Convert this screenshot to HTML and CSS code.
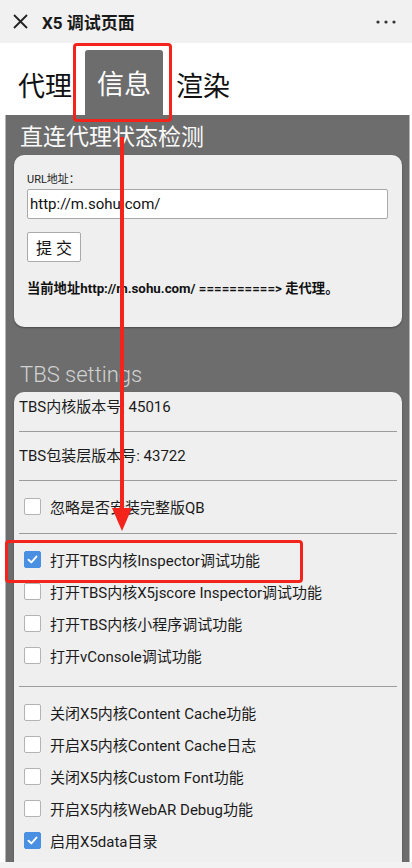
FILE: index.html
```html
<!DOCTYPE html>
<html lang="zh-CN">
<head>
<meta charset="utf-8">
<meta name="viewport" content="width=device-width, initial-scale=1">
<title>X5 调试页面</title>
<link rel="stylesheet" href="styles.css">
</head>
<body>
<div class="topbar">
  <svg class="close-icon" viewBox="0 0 15 15" aria-hidden="true"><path d="M1 1L14 14M14 1L1 14" stroke="#222" stroke-width="1.8" fill="none"/></svg>
  <span class="title">X5 调试页面</span>
  <svg class="more-icon" viewBox="0 0 20 4" aria-hidden="true"><circle cx="2" cy="2" r="1.6" fill="#333"/><circle cx="10" cy="2" r="1.6" fill="#333"/><circle cx="18" cy="2" r="1.6" fill="#333"/></svg>
</div>

<div class="tabs">
  <span class="tab">代理</span>
  <span class="tab tab-active">信息</span>
  <span class="tab">渲染</span>
</div>

<div class="panel">
  <h2 class="section-title">直连代理状态检测</h2>
  <div class="card card-proxy">
    <label class="field-label">URL地址：</label>
    <input class="url-input" type="text" value="http://m.sohu.com/">
    <button class="submit-btn">提 交</button>
    <p class="result">当前地址http://m.sohu.com/ ==========&gt; 走代理。</p>
  </div>

  <h2 class="section-title section-light">TBS settings</h2>
  <div class="card card-settings">
    <div class="info-row">TBS内核版本号: 45016</div>
    <div class="sep"></div>
    <div class="info-row">TBS包装层版本号: 43722</div>
    <div class="sep"></div>
    <div class="group group-a">
      <div class="check-row"><span class="box"></span>忽略是否安装完整版QB</div>
    </div>
    <div class="sep"></div>
    <div class="group group-b">
      <div class="check-row"><span class="box checked"><svg viewBox="0 0 17 17"><path d="M4 8.8L7.2 11.8L13 5.2" stroke="#fff" stroke-width="2.2" fill="none" stroke-linecap="round" stroke-linejoin="round"/></svg></span>打开TBS内核Inspector调试功能</div>
      <div class="check-row"><span class="box"></span>打开TBS内核X5jscore Inspector调试功能</div>
      <div class="check-row"><span class="box"></span>打开TBS内核小程序调试功能</div>
      <div class="check-row"><span class="box"></span>打开vConsole调试功能</div>
    </div>
    <div class="sep"></div>
    <div class="group group-c">
      <div class="check-row"><span class="box"></span>关闭X5内核Content Cache功能</div>
      <div class="check-row"><span class="box"></span>开启X5内核Content Cache日志</div>
      <div class="check-row"><span class="box"></span>关闭X5内核Custom Font功能</div>
      <div class="check-row"><span class="box"></span>开启X5内核WebAR Debug功能</div>
      <div class="check-row"><span class="box checked"><svg viewBox="0 0 17 17"><path d="M4 8.8L7.2 11.8L13 5.2" stroke="#fff" stroke-width="2.2" fill="none" stroke-linecap="round" stroke-linejoin="round"/></svg></span>启用X5data目录</div>
    </div>
  </div>
</div>

<div class="mark mark-tab"></div>
<div class="mark-line"></div>
<div class="mark-head"></div>
<div class="mark mark-row"></div>

<div class="bottom-bar"></div>
</body>
</html>
```

FILE: styles.css
```css
* {
  box-sizing: border-box;
}

html,
body {
  margin: 0;
  height: 868px;
  overflow: hidden;
  background: #ffffff;
}

body {
  position: relative;
  font-family: Roboto, "Noto Sans CJK SC", sans-serif;
  color: #1b1b1b;
}

/* top bar */
.topbar {
  height: 43px;
  background: #f1f1f1;
  display: flex;
  align-items: center;
  padding: 0 16px 0 13px;
}

.close-icon {
  width: 15px;
  height: 15px;
  flex: none;
}

.title {
  margin-left: 14px;
  font-size: 17px;
  font-weight: bold;
  color: #1a1a1a;
}

.more-icon {
  margin-left: auto;
  width: 20px;
  height: 4px;
}

/* tabs */
.tabs {
  height: 72px;
  display: flex;
  align-items: flex-end;
  padding-left: 18px;
}

.tab {
  height: 65px;
  display: flex;
  align-items: center;
  padding-top: 4px;
  font-size: 27px;
  color: #111;
}

.tab-active {
  background: #6d6d6d;
  color: #ffffff;
  padding: 0 12px;
  margin: 0 13px;
  border-radius: 3px 3px 0 0;
}

/* panel */
.panel {
  margin-left: 5px;
  width: 405px;
  background: #6d6d6d;
  border-left: 1px solid #b4b4b4;
  border-right: 1px solid #b4b4b4;
  padding-bottom: 40px;
}

.section-title {
  margin: 0;
  padding: 6px 0 0 14px;
  line-height: 34px;
  font-size: 23px;
  font-weight: normal;
  color: #fafafa;
}

.section-light {
  margin: 33px 0 2px;
  padding: 0 0 0 14px;
  line-height: 30px;
  font-size: 22px;
  font-weight: 300;
  color: #d2d2d2;
}

.card {
  margin: 0 7px 0 8px;
  background: #efefef;
  border-radius: 10px;
  box-shadow: 0 1px 2px rgba(0, 0, 0, 0.35);
}

.card-proxy {
  padding: 18px 14px 30px 13px;
}

.field-label {
  display: block;
  font-size: 11px;
  line-height: 14px;
  color: #222;
}

.url-input {
  display: block;
  width: 100%;
  height: 30px;
  margin-top: 2px;
  padding: 0 2px;
  border: 1px solid #a9a9a9;
  border-radius: 2px;
  background: #fff;
  font-family: inherit;
  font-size: 15px;
  color: #111;
}

.submit-btn {
  display: block;
  margin-top: 13px;
  width: 54px;
  height: 30px;
  padding: 0;
  background: #fff;
  border: 1px solid #aaa;
  border-radius: 2px;
  font-family: inherit;
  font-size: 16px;
  color: #111;
}

.result {
  margin: 19px 0 0;
  font-size: 13.3px;
  font-weight: bold;
  line-height: 16px;
  color: #111;
}

.card-settings {
  padding: 0 5px 60px;
}

.info-row {
  line-height: 30px;
  font-size: 15px;
}

.sep {
  height: 1px;
  background: #9c9c9c;
  margin: 9px 0;
}

.group-a {
  padding-bottom: 2px;
}

.group-b {
  padding-bottom: 6px;
}

.check-row {
  display: flex;
  align-items: center;
  height: 32px;
  padding-left: 5px;
  font-size: 15px;
}

.box {
  flex: none;
  width: 17px;
  height: 17px;
  margin-right: 9px;
  border: 1px solid #b3b3b3;
  border-radius: 2px;
  background: #fff;
}

.box.checked {
  background: #4a90e2;
  border-color: #4a90e2;
}

.box svg {
  display: block;
  width: 15px;
  height: 15px;
}

/* red annotations */
.mark {
  position: absolute;
  border: 3px solid #f4231c;
  border-radius: 4px;
}

.mark-tab {
  left: 73px;
  top: 43px;
  width: 99px;
  height: 79px;
}

.mark-row {
  left: 5px;
  top: 540px;
  width: 298px;
  height: 43px;
}

.mark-line {
  position: absolute;
  left: 120px;
  top: 137px;
  width: 4px;
  height: 373px;
  background: #f4231c;
}

.mark-head {
  position: absolute;
  left: 112px;
  top: 508px;
  width: 0;
  height: 0;
  border-left: 10px solid transparent;
  border-right: 10px solid transparent;
  border-top: 23px solid #f4231c;
}

.bottom-bar {
  position: fixed;
  left: 0;
  right: 0;
  bottom: 0;
  height: 6px;
  background: #f2f2f2;
}
```
